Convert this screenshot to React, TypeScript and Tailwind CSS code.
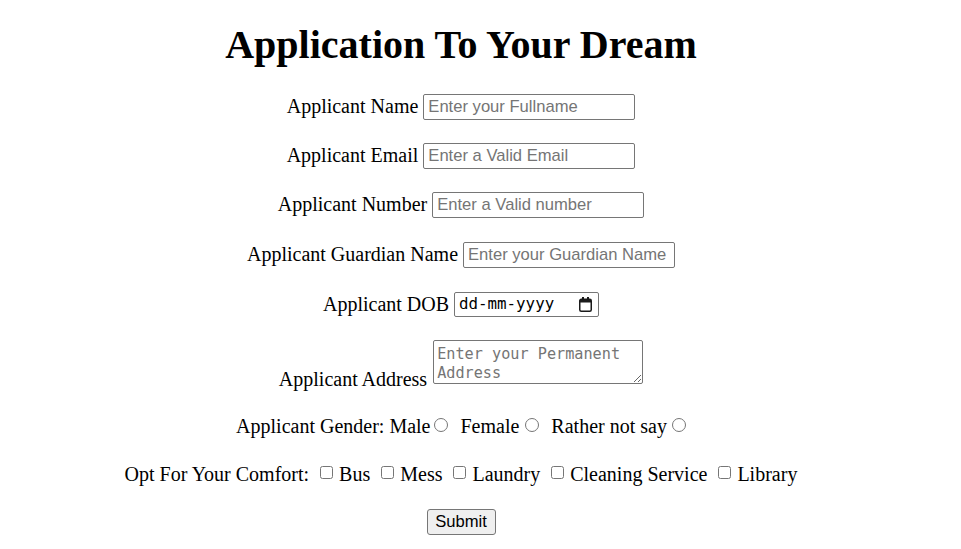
import React from 'react'

const serif = "font-['Liberation_Serif','Times_New_Roman',serif]"
const sans = "font-['Liberation_Sans',Arial,sans-serif]"
const mono = "font-['DejaVu_Sans_Mono','Liberation_Mono',monospace]"

const textInput =
  "h-[26px] w-[212px] rounded-[2px] border border-[#767676] bg-white pl-[4px] pr-[3px] text-[16.6px] text-black outline-none placeholder:text-[#757575] " +
  sans

function Row({ label, placeholder }: { label: string; placeholder: string }) {
  return (
    <div className="flex h-[49.4px] items-center justify-center gap-[5px]">
      <label className="-translate-y-[1px] text-[20px] leading-none">{label}</label>
      <input type="text" placeholder={placeholder} className={textInput} />
    </div>
  )
}

function CalendarIcon() {
  return (
    <svg width="13" height="15" viewBox="0 0 13 15" fill="none">
      <rect x="3" y="0" width="2" height="3" fill="#1b1b1b" />
      <rect x="8" y="0" width="2" height="3" fill="#1b1b1b" />
      <rect x="0.75" y="2.25" width="11.5" height="12" rx="1.5" stroke="#1b1b1b" strokeWidth="1.5" />
      <rect x="1" y="2.5" width="11" height="3" fill="#1b1b1b" />
    </svg>
  )
}

function Radio() {
  return (
    <span className="inline-block h-[14px] w-[14px] -translate-y-[1px] rounded-full border border-[#767676] bg-white" />
  )
}

function Check() {
  return (
    <span className="inline-block h-[13px] w-[13px] -translate-y-[1px] rounded-[2.5px] border border-[#767676] bg-white" />
  )
}

export default function App() {
  return (
    <div className={`flex w-[922px] flex-col items-center bg-white pt-[22px] text-black ${serif}`}>
      <h1 className="h-[46px] text-[40px] font-bold leading-[46px]">Application To Your Dream</h1>

      <form className="mt-[14px] flex w-full flex-col text-[20px]">
        <Row label="Applicant Name" placeholder="Enter your Fullname" />
        <Row label="Applicant Email" placeholder="Enter a Valid Email" />
        <Row label="Applicant Number" placeholder="Enter a Valid number" />
        <Row label="Applicant Guardian Name" placeholder="Enter your Guardian Name" />

        {/* DOB */}
        <div className="flex h-[49.4px] items-center justify-center gap-[5px]">
          <label className="leading-none">Applicant DOB</label>
          <div className="flex h-[25px] w-[145px] items-center justify-between rounded-[2px] border border-[#767676] bg-white pl-[4px] pr-[6px]">
            <span className={`text-[15.8px] leading-none ${mono}`}>dd-mm-yyyy</span>
            <CalendarIcon />
          </div>
        </div>

        {/* Address */}
        <div className="mt-[11px] flex h-[44px] items-end justify-center gap-[6px]">
          <label className="translate-y-[5px] leading-none">Applicant Address</label>
          <textarea
            placeholder="Enter your Permanent Address"
            className={`h-[44px] w-[210px] rounded-[2px] border border-[#767676] bg-white px-[3px] pt-[4px] text-[15.2px] leading-[19px] outline-none placeholder:text-[#757575] ${mono}`}
          />
        </div>

        {/* Gender */}
        <div className="mt-[18px] flex h-[48px] items-center justify-center">
          <span>Applicant Gender: Male</span>
          <span className="ml-[4px] mr-[12px] flex"><Radio /></span>
          <span>Female</span>
          <span className="ml-[6px] mr-[12px] flex"><Radio /></span>
          <span>Rather not say</span>
          <span className="ml-[5px] flex"><Radio /></span>
        </div>

        {/* Comfort */}
        <div className="flex h-[48px] items-center justify-center">
          <span>Opt For Your Comfort:</span>
          <span className="ml-[11px] mr-[6px] flex"><Check /></span>
          <span>Bus</span>
          <span className="ml-[11px] mr-[6px] flex"><Check /></span>
          <span>Mess</span>
          <span className="ml-[11px] mr-[6px] flex"><Check /></span>
          <span>Laundry</span>
          <span className="ml-[11px] mr-[6px] flex"><Check /></span>
          <span>Cleaning Service</span>
          <span className="ml-[11px] mr-[6px] flex"><Check /></span>
          <span>Library</span>
        </div>

        <div className="mt-[11px] flex justify-center">
          <button
            type="button"
            className={`h-[26px] w-[69px] rounded-[3px] border border-[#767676] bg-[#efefef] text-[16.6px] leading-none ${sans}`}
          >
            Submit
          </button>
        </div>
      </form>
    </div>
  )
}
